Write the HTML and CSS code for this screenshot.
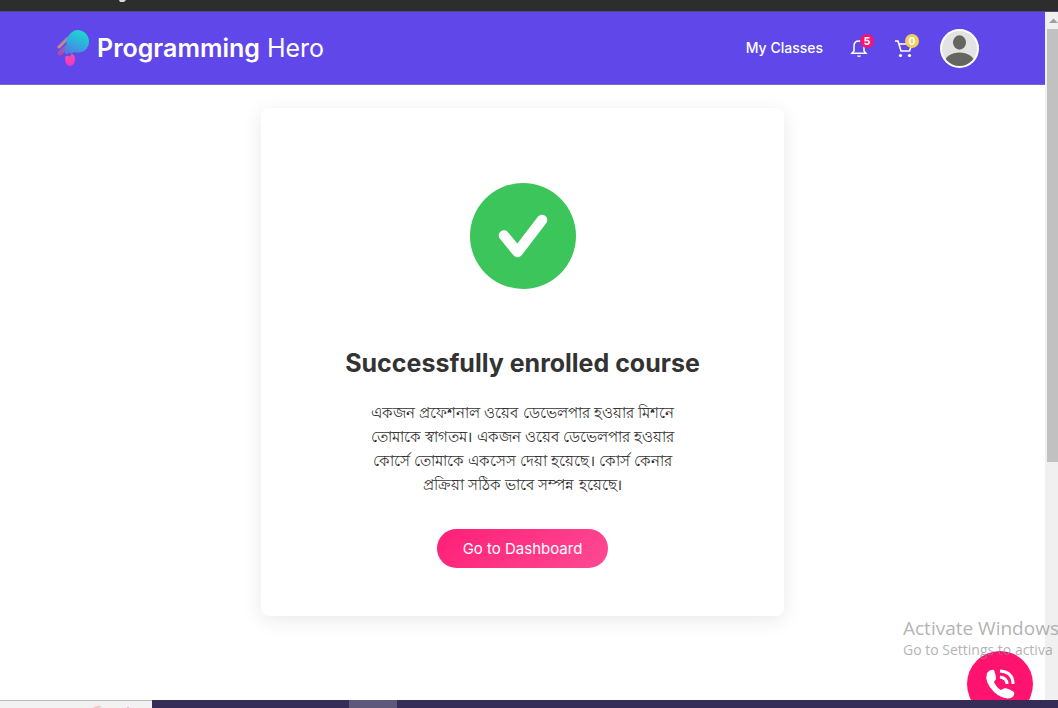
FILE: index.html
```html
<!DOCTYPE html>
<html lang="en">
<head>
<meta charset="utf-8">
<meta name="viewport" content="width=device-width, initial-scale=1">
<title>Programming Hero</title>
<link rel="stylesheet" href="styles.css">
</head>
<body>
<div class="browser-strip"><svg width="10" height="2" viewBox="0 0 10 2" aria-hidden="true"><path d="M1 0H8L6 2H2Z" fill="#d8d8d8"/></svg></div>
<div class="viewport">
  <div class="page">
    <header class="navbar">
      <a class="brand" href="#">
        <svg class="brand-mark" width="34" height="38" viewBox="0 0 34 38" aria-hidden="true">
          <defs>
            <linearGradient id="ball" gradientUnits="userSpaceOnUse" x1="24" y1="1" x2="13" y2="25"><stop offset="0" stop-color="#1fd8cf"/><stop offset="0.550" stop-color="#32a9de"/><stop offset="1" stop-color="#5478e6"/></linearGradient>
            <linearGradient id="flameA" gradientUnits="userSpaceOnUse" x1="1" y1="19" x2="12" y2="9"><stop offset="0" stop-color="#e07f86"/><stop offset="1" stop-color="#7f9fae"/></linearGradient>
            <linearGradient id="flameB" gradientUnits="userSpaceOnUse" x1="1" y1="26" x2="14" y2="15"><stop offset="0" stop-color="#c93c9e"/><stop offset="1" stop-color="#4b86e0"/></linearGradient>
            <linearGradient id="tongue" x1="0" y1="0" x2="0" y2="1"><stop offset="0" stop-color="#e8559f"/><stop offset="1" stop-color="#ff2fc4"/></linearGradient>
          </defs>
          <path d="M2 18 11 9" stroke="url(#flameA)" stroke-width="3" stroke-linecap="round"/>
          <path d="M3 24 14 14" stroke="url(#flameB)" stroke-width="5" stroke-linecap="round"/>
          <path d="M21 1A11.500 11.500 0 0 1 27 22Q22 25 17 23Q15 26 12 24Q9 27 8 23Q7 20 10 16Q8 11 12 6Q16 1 21 1Z" fill="url(#ball)"/>
          <path d="M8 29Q8 26 12 27L13 28 14 25Q18 25 18 30Q18 36 13 37Q8 36 8 29Z" fill="url(#tongue)"/>
        </svg>
        <span class="brand-name"><strong>Programming</strong> Hero</span>
      </a>
      <nav class="menu">
        <a class="menu-link" href="#">My Classes</a>
        <button class="icon-button" type="button" aria-label="Notifications">
          <svg width="18" height="20" viewBox="0 0 18 20" fill="none" stroke="#fff" stroke-width="1.500" aria-hidden="true"><path d="M2 15.300H16L14 13V8Q14 3 9 3T4 8V13Z"/><path d="M7 17.500H11Q10.500 19 9 19T7 17.500Z" fill="#fff" stroke="none"/></svg>
          <span class="badge badge-pink">5</span>
        </button>
        <button class="icon-button" type="button" aria-label="Cart">
          <svg width="18" height="20" viewBox="0 0 18 20" fill="none" stroke="#fff" stroke-width="1.600" aria-hidden="true"><path d="M0 3H3L6 13H14.500L17 6"/><path d="M4 6H17"/><circle cx="5.500" cy="17.500" r="1.600" fill="#fff" stroke="none"/><circle cx="14.500" cy="17.500" r="1.600" fill="#fff" stroke="none"/></svg>
          <span class="badge badge-yellow">0</span>
        </button>
        <button class="avatar" type="button" aria-label="Account">
          <svg width="39" height="39" viewBox="0 0 39 39" aria-hidden="true">
            <defs><clipPath id="face"><circle cx="19.500" cy="19.500" r="17.500"/></clipPath></defs>
            <circle cx="19.500" cy="19.500" r="19.500" fill="#fff"/><circle cx="19.500" cy="19.500" r="17.500" fill="#e3e3e3"/>
            <g clip-path="url(#face)" fill="#666661"><ellipse cx="19.500" cy="13.500" rx="6.500" ry="7.200"/><ellipse cx="19.500" cy="34" rx="15" ry="10.500"/></g>
          </svg>
        </button>
      </nav>
    </header>
    <main class="content">
      <section class="card">
        <svg class="success" width="106" height="106" viewBox="0 0 106 106" aria-hidden="true"><circle cx="53" cy="53" r="53" fill="#3bc55b"/><path d="M34 52.500 47.500 69 72 37" fill="none" stroke="#fff" stroke-width="10.500" stroke-linecap="round" stroke-linejoin="round"/></svg>
        <h1 class="title">Successfully enrolled course</h1>
        <p class="message" lang="bn">একজন প্রফেশনাল ওয়েব ডেভেলপার হওয়ার মিশনে<br>তোমাকে স্বাগতম। একজন ওয়েব ডেভেলপার হওয়ার<br>কোর্সে তোমাকে একসেস দেয়া হয়েছে। কোর্স কেনার<br>প্রক্রিয়া সঠিক ভাবে সম্পন্ন হয়েছে।</p>
        <a class="dashboard-link" href="#">Go to Dashboard</a>
      </section>
    </main>
  </div>
  <div class="scrollbar" aria-hidden="true">
    <svg class="scroll-arrow" width="11" height="17" viewBox="0 0 11 17"><path d="M2 11 6.500 6.500 11 11Z" fill="#a0a0a0"/></svg>
    <div class="scroll-thumb"></div>
  </div>
  <button class="call" type="button" aria-label="Call">
    <svg width="66" height="66" viewBox="0 0 66 66" aria-hidden="true">
      <circle cx="33" cy="33" r="33" fill="#ff136f"/>
      <path d="M20 22Q23 18 27 19Q29 24 29 28L27 31Q29 36 34 39L38 37Q43 38 47 41Q48 45 44 47Q36 49 27 41Q17 31 20 22Z" fill="#fff"/>
      <path d="M33 20Q46 21 46 33M33 26Q40 27 40 33" fill="none" stroke="#fff" stroke-width="3"/>
    </svg>
  </button>
  <div class="watermark"><div class="watermark-title">Activate Windows</div><div class="watermark-text">Go to Settings to activa</div></div>
</div>
<div class="taskbar"><div class="task-search"><svg width="50" height="7" viewBox="0 0 50 7" aria-hidden="true"><path d="M3 7Q5 4 12 5L9 7Z" fill="#f3c9c9"/><circle cx="38" cy="7" r="1" fill="#dcb5dc"/></svg></div><div class="task-active"></div></div>
</body>
</html>
```
FILE: styles.css
```css
* { box-sizing: border-box; }
body {
  margin: 0;
  min-height: 100vh;
  display: flex;
  flex-direction: column;
  overflow: hidden;
  background: #fff;
  color: #333;
  font-family: Inter, "Noto Sans", sans-serif;
}
a { color: inherit; text-decoration: none; }
button { padding: 0; border: 0; background: none; color: inherit; font: inherit; }
svg { display: block; }
.browser-strip { height: 12px; padding-left: 118px; background: #2d2d2d; border-bottom: 1px solid #50487f; }
.viewport { position: relative; flex: 1; display: flex; overflow: hidden; }
.page { flex: 1; min-width: 0; background: #fff; }
.navbar {
  display: flex;
  align-items: center;
  justify-content: space-between;
  height: 73px;
  padding: 0 66px 0 57px;
  background: #5f47e9;
  border-bottom: 1px solid #7765dd;
  color: #fff;
}
.brand { display: flex; align-items: center; gap: 6px; }
.brand-name { font-size: 25px; line-height: 32px; white-space: nowrap; }
.brand-name strong { font-weight: 600; }
.menu { display: flex; align-items: center; gap: 27px; }
.menu-link { font-size: 14px; font-weight: 500; line-height: 20px; white-space: nowrap; }
.icon-button { position: relative; }
.badge {
  position: absolute;
  top: -4px;
  right: -6px;
  width: 14px;
  height: 14px;
  border-radius: 50%;
  font-size: 10px;
  font-weight: 800;
  line-height: 14px;
  text-align: center;
}
.badge-pink { background: #f51474; }
.badge-yellow { background: #f4cf58; }
.content { padding: 23px 0; }
.card {
  display: flex;
  flex-direction: column;
  align-items: center;
  width: 50%;
  margin: 0 auto;
  padding: 75px 24px 48px;
  border-radius: 8px;
  background: #fff;
  box-shadow: 0 4px 20px rgba(0, 0, 0, .09);
}
.title { margin: 56px 0 0; font-size: 25px; font-weight: 700; line-height: 36px; text-align: center; white-space: nowrap; }
.message { margin: 20px 0 32px; font-size: 15px; line-height: 24px; text-align: center; white-space: nowrap; }
.dashboard-link {
  padding: 9px 26px;
  border-radius: 20px;
  background: linear-gradient(135deg, #ff1f76, #ff4a93);
  color: #fff;
  font-size: 15px;
  line-height: 21px;
}
.scrollbar { width: 13px; padding-left: 2px; background: #f0f0f0; }
.scroll-thumb { height: 433px; background: #c1c1c1; }
.call { position: absolute; right: 25px; bottom: -17px; }
.watermark {
  position: absolute;
  left: calc(100% - 155px);
  bottom: 40px;
  color: rgba(135, 135, 135, .65);
  font-family: "Open Sans", "Noto Sans", sans-serif;
  white-space: nowrap;
}
.watermark-title { font-size: 19px; line-height: 24px; }
.watermark-text { font-size: 14px; line-height: 20px; }
.taskbar { display: flex; height: 8px; background: #352d57; }
.task-search { width: 152px; padding-left: 90px; overflow: hidden; background: #f2f2f2; border-top: 1px solid #bbb; }
.task-active { width: 48px; margin-left: 197px; background: #5e587b; }
```
